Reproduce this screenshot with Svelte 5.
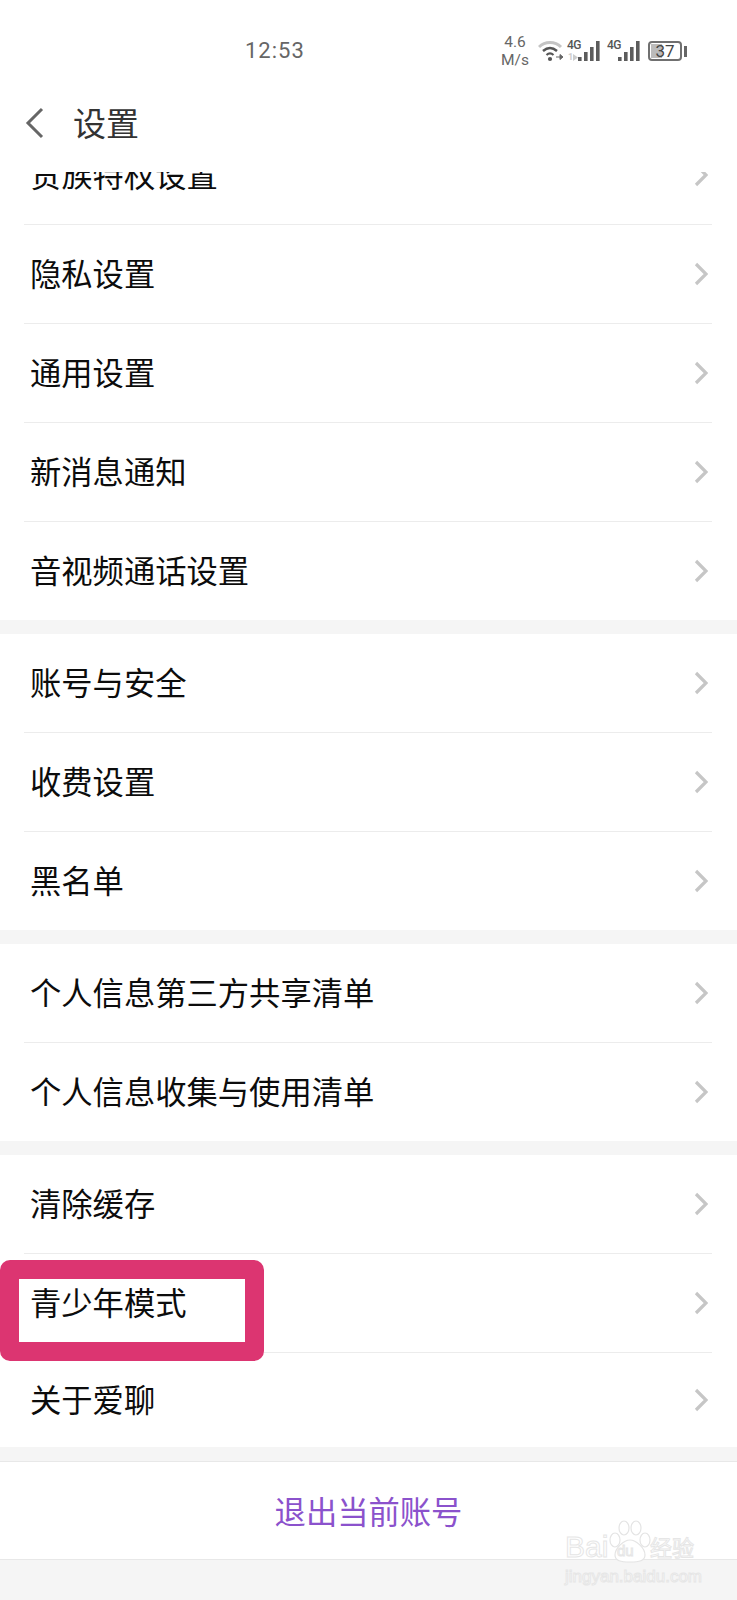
<script lang="ts">
	const groups = [
		['贵族特权设置', '隐私设置', '通用设置', '新消息通知', '音视频通话设置'],
		['账号与安全', '收费设置', '黑名单'],
		['个人信息第三方共享清单', '个人信息收集与使用清单'],
		['清除缓存', '青少年模式', '关于爱聊']
	];
	const marked = '青少年模式';
</script>

<div class="page">
	<header>
		<div class="status">
			<span class="time">12:53</span>
			<div class="speed"><span>4.6</span><span>M/s</span></div>
			<svg class="wifi" width="28" height="22" viewBox="0 0 28 22">
				<path d="M1 7 C7 1 17 1 23 7" fill="none" stroke="#c4c4c4" stroke-width="3" />
				<path d="M5 11 C9.500 7 14.500 7 19 11" fill="none" stroke="#555" stroke-width="2.400" />
				<path d="M8.500 15 C10.800 13 13.200 13 15.500 15" fill="none" stroke="#555" stroke-width="2.200" />
				<circle cx="12" cy="19" r="2.100" fill="#555" />
				<path d="M18 17h4M22 14.500l3 2.500-3 2.500z" fill="#666" stroke="#666" stroke-width="1" />
			</svg>
			<div class="sim first">
				<span class="g">4G</span>
				<span class="up">1</span>
				<svg class="arrow" width="6" height="7" viewBox="0 0 6 7"><path d="M0 0l5 3.500-5 3.500z" fill="#ccc" /></svg>
				<svg width="22" height="20" viewBox="0 0 22 20">
					<path d="M0 20v-4h3.600v4zM6 20v-9h3.600v9zM12 20v-14h3.600v14zM18 20v-20h3.600v20z" fill="#5c5c5c" />
				</svg>
			</div>
			<div class="sim">
				<span class="g">4G</span>
				<svg width="22" height="20" viewBox="0 0 22 20">
					<path d="M0 20v-4h3.600v4zM6 20v-9h3.600v9zM12 20v-14h3.600v14zM18 20v-20h3.600v20z" fill="#5c5c5c" />
				</svg>
			</div>
			<div class="battery">
				<div class="cell"><i></i><span>37</span></div>
				<b></b>
			</div>
		</div>
		<nav>
			<svg width="20" height="32" viewBox="0 0 20 32">
				<path d="M17 2 3 16l14 14" fill="none" stroke="#666" stroke-width="3" />
			</svg>
			<h1>设置</h1>
		</nav>
	</header>

	<main>
		<div class="list">
			{#each groups as rows}
				<section>
					{#each rows as row}
						<div class="row">
							{#if row === marked}<div class="mark"></div>{/if}
							<span class="label">{row}</span>
							<svg class="chev" width="14" height="24" viewBox="0 0 14 24">
								<path d="M2 2 12 12 2 22" fill="none" stroke="#c6c6c6" stroke-width="3.200" />
							</svg>
						</div>
					{/each}
				</section>
			{/each}
			<div class="logout">退出当前账号</div>
		</div>
	</main>

	<div class="watermark">
		<svg width="42" height="43" viewBox="0 0 42 43">
			<g fill="#fff" stroke="#e4e4e4" stroke-width="1.200">
				<ellipse cx="6" cy="20" rx="5" ry="7" />
				<ellipse cx="15" cy="8" rx="5" ry="7" />
				<ellipse cx="27" cy="8" rx="5" ry="7" />
				<ellipse cx="36" cy="20" rx="5" ry="7" />
				<path d="M21 20c-6 0-15 8-15 15 0 6 6 7 15 7s15-1 15-7c0-7-9-15-15-15z" />
			</g>
		</svg>
		<div class="wm-top"><span class="bai">Bai</span><span class="du">du</span><span class="jy">经验</span></div>
		<div class="wm-url">jingyan.baidu.com</div>
	</div>
</div>

<style>
	:global(body) {
		background: #f5f5f5;
	}
	.page {
		position: relative;
		width: 737px;
		height: 1600px;
		overflow: hidden;
		background: #f5f5f5;
		font-family: 'Noto Sans CJK SC', 'Liberation Sans', sans-serif;
	}
	header {
		background: #fff;
		height: 172px;
	}
	.status {
		display: flex;
		align-items: center;
		height: 38px;
		padding: 31px 0 5px 245px;
		color: #666;
		font-family: Roboto, 'Liberation Sans', sans-serif;
	}
	.time {
		font-size: 22px;
		letter-spacing: 1px;
		width: 257px;
	}
	.speed {
		display: flex;
		flex-direction: column;
		align-items: center;
		font-size: 15.500px;
		line-height: 18px;
		width: 26px;
		padding-top: 2px;
	}
	.wifi {
		margin-left: 10px;
		margin-top: 2px;
	}
	.sim {
		position: relative;
		width: 40px;
		height: 20px;
		margin-top: 2px;
		display: flex;
		justify-content: flex-end;
		align-items: flex-end;
	}
	.sim.first {
		width: 34px;
	}
	.g {
		position: absolute;
		left: 1px;
		top: -2px;
		font-size: 12px;
		line-height: 13px;
		font-weight: 500;
		letter-spacing: -0.5px;
		color: #555;
	}
	.sim:not(.first) .g {
		left: 7px;
	}
	.up {
		position: absolute;
		left: 2px;
		bottom: -1px;
		font-size: 9px;
		line-height: 10px;
		font-weight: 700;
		color: #ccc;
	}
	.arrow {
		position: absolute;
		left: 7px;
		bottom: 0;
	}
	.battery {
		display: flex;
		align-items: center;
		margin-left: 8px;
		margin-top: 2px;
		gap: 2px;
	}
	.cell {
		position: relative;
		width: 34px;
		height: 20px;
		border: 2px solid #707070;
		border-radius: 4px;
		box-sizing: border-box;
		text-align: center;
		font-size: 17px;
		line-height: 16px;
		color: #444;
	}
	.cell i {
		position: absolute;
		left: 1px;
		top: 1px;
		bottom: 1px;
		width: 11px;
		background: #bbb;
	}
	.cell span {
		position: relative;
	}
	.battery b {
		width: 3px;
		height: 11px;
		background: #666;
	}
	nav {
		display: flex;
		align-items: center;
		height: 98px;
		padding-left: 25px;
	}
	h1 {
		margin: -3px 0 0 28px;
		font-size: 33px;
		font-weight: 400;
		color: #333;
	}
	main {
		height: 1428px;
		overflow: hidden;
	}
	.list {
		margin-top: -46px;
	}
	section {
		background: #fff;
		margin-bottom: 14px;
	}
	.row {
		position: relative;
		display: flex;
		align-items: center;
		justify-content: space-between;
		box-sizing: border-box;
		height: 99px;
		margin-left: 24px;
		margin-right: 25px;
		padding: 0 4px 0 6px;
		border-bottom: 1px solid #ececec;
	}
	.row:last-child {
		border-bottom: 0;
		height: 98px;
	}
	section:nth-of-type(4) .row:last-child {
		height: 94px;
	}
	.label {
		position: relative;
		font-size: 31.300px;
		margin-bottom: 4px;
		color: #0c0c0c;
	}
	.mark {
		position: absolute;
		left: -24px;
		top: 6px;
		width: 264px;
		height: 101px;
		box-sizing: border-box;
		background: #fff;
		border: 19.500px solid #dc3571;
		border-radius: 10px;
	}
	.logout {
		height: 99px;
		box-sizing: border-box;
		line-height: 97px;
		background: #fff;
		border-top: 1px solid #e8e8e8;
		border-bottom: 1px solid #e8e8e8;
		text-align: center;
		font-size: 31.300px;
		color: #8b52cc;
	}
	.watermark {
		position: absolute;
		left: 565px;
		top: 1520px;
		width: 135px;
		font-family: 'Liberation Sans', 'Noto Sans CJK SC', sans-serif;
		color: #fff;
		-webkit-text-stroke: 1px #e6e6e6;
	}
	.watermark svg {
		position: absolute;
		left: 44px;
		top: 0;
	}
	.wm-top {
		position: relative;
		display: flex;
		align-items: flex-end;
		height: 43px;
		font-size: 30px;
		line-height: 32px;
	}
	.bai {
		width: 52px;
	}
	.du {
		width: 33px;
		font-size: 15px;
		line-height: 24px;
	}
	.jy {
		font-size: 22px;
		line-height: 28px;
		white-space: nowrap;
	}
	.wm-url {
		font-size: 17px;
		line-height: 20px;
		margin-top: 4px;
		white-space: nowrap;
	}
</style>
